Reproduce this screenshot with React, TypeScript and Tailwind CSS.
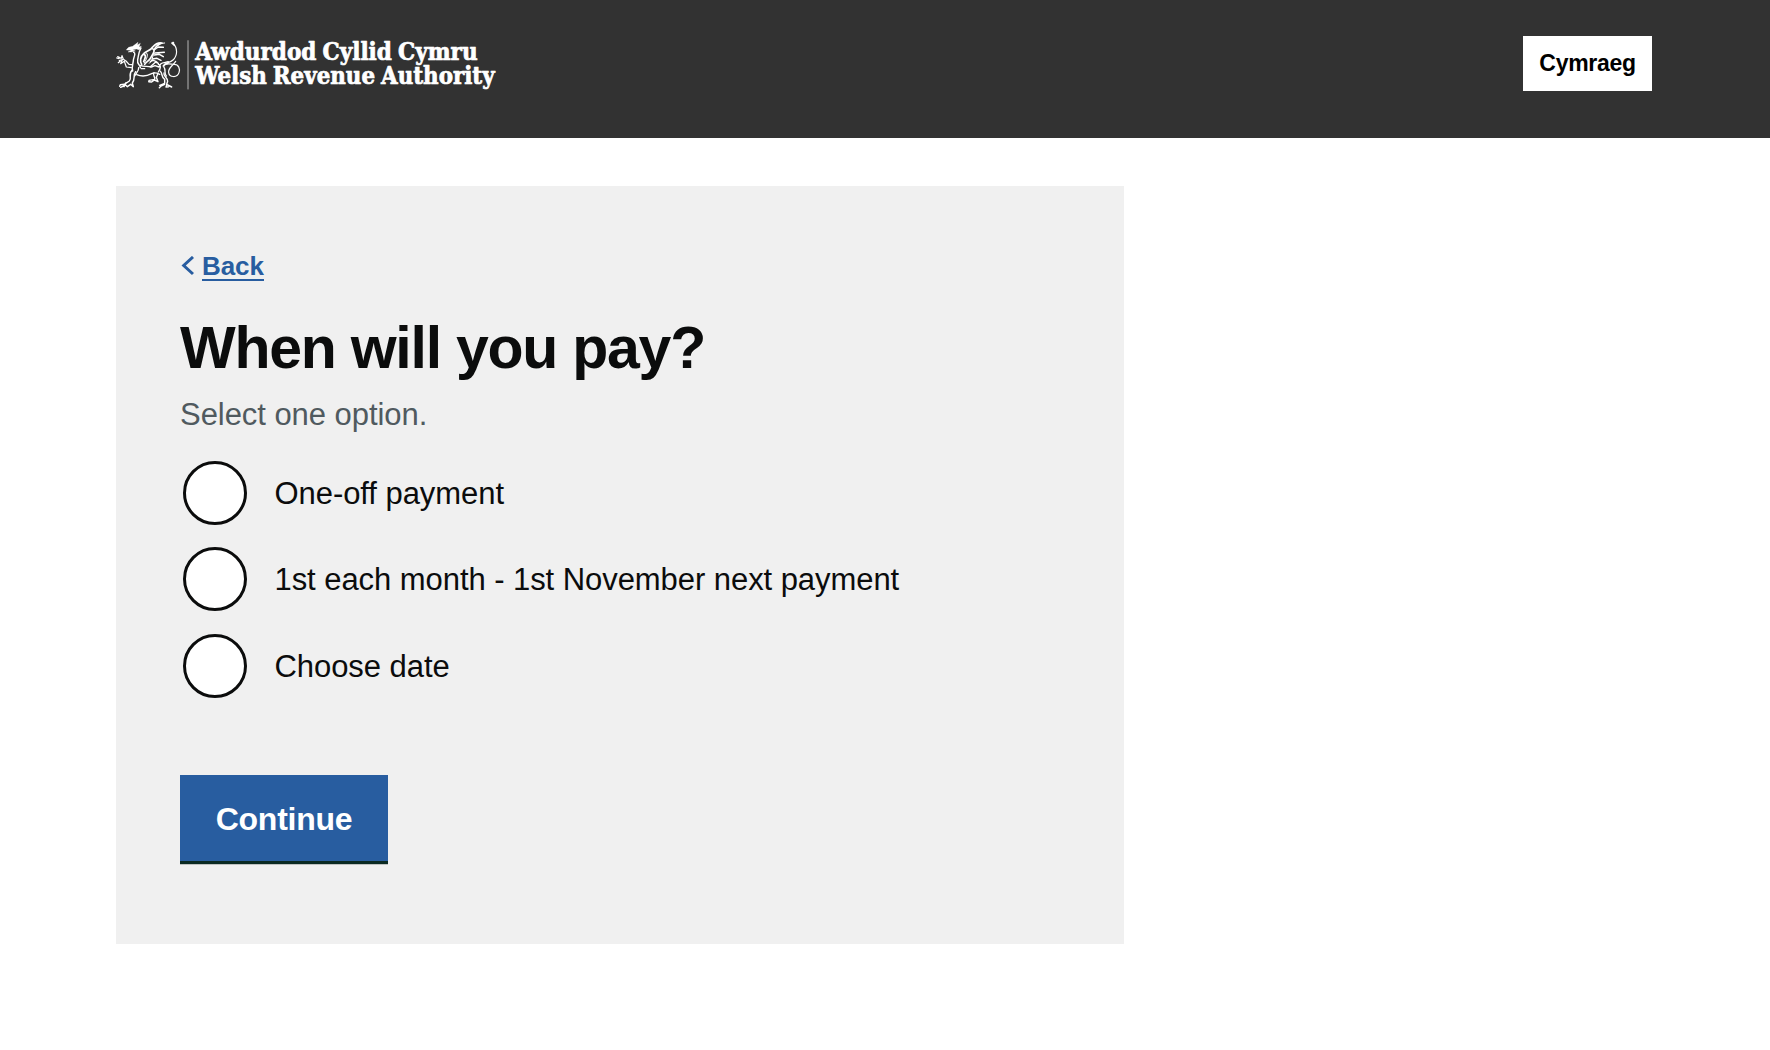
import React from "react";

function Logo() {
  return (
    <svg
      className="block h-[60px] w-[384px]"
      viewBox="18 0 1152 180"
      role="img"
      aria-label="Awdurdod Cyllid Cymru / Welsh Revenue Authority"
      fill="none"
      stroke="white"
      strokeLinecap="round"
      strokeLinejoin="round"
    >
      {/* Head and neck */}
      <path d="M50 46L56 40L68 37L84 25L82 33L91 28L87 39L94 37L88 48L80 45L68 47L76 51L64 54L54 54L64 49L50 48Z" fill="white" strokeWidth="1" />
      <path d="M71 55C79 57 70 72 70 79C70 88 64 98 68 111M93 42C84 58 86 66 83 77C80 92 91 91 91 101" strokeWidth="4.3" />
      {/* Raised foreleg */}
      <path d="M23 68L34 73L36 65L40 76L48 81L57 91L65 92M28 80L37 77L32 89L43 82L49 99L64 101M20 72L27 74M25 86L31 81" strokeWidth="3.7" />
      {/* Wings */}
      <path d="M95 91C89 82 91 68 101 59C111 49 122 50 128 39C137 29 145 25 156 27C145 31 137 37 132 48M101 61C111 63 104 75 101 83M129 45C138 49 126 64 121 73C117 81 109 83 104 91" strokeWidth="5" />
      <path d="M132 48L145 39L160 40M135 57L163 55M133 63L148 61L160 68M127 75L141 73L153 79M121 83C126 78 137 78 145 88L137 84L121 98" strokeWidth="4.3" />
      <path d="M107 56C118 58 110 75 103 87M133 58C125 69 130 76 118 88M149 29L164 27" strokeWidth="3" />
      {/* Body */}
      <path d="M91 94C103 100 111 95 124 99L135 95L147 99L152 90C158 84 168 86 175 83M94 104L104 104M80 122C97 129 110 127 125 119C134 114 141 117 149 121M145 91C155 94 151 105 145 114" strokeWidth="4" />
      {/* Front legs */}
      <path d="M66 109C53 124 67 132 58 141L43 151L31 152M77 113C68 124 77 134 67 147L70 158L62 151L52 158L47 153L32 160M31 152L29 157M48 146L42 158" strokeWidth="4.3" />
      <path d="M86 101C87 111 80 115 74 126" strokeWidth="4" />
      {/* Hind legs */}
      <path d="M132 116C126 125 137 128 134 136L117 139M143 121L139 130L144 143L133 138L125 144L116 143M151 112C159 119 153 130 164 136L164 148L149 154M162 117C159 127 174 132 173 142L170 151L185 159M164 151L153 156L148 161M171 151L168 159L176 158" strokeWidth="4.3" />
      {/* Tail */}
      <path d="M159 96C165 84 179 88 189 78C203 64 204 43 188 25M193 35L185 27L191 25M162 96C166 85 184 91 193 91C206 91 211 105 207 116C202 132 178 131 176 116C173 102 188 96 197 82" strokeWidth="3.5" />
      <path d="M161 98C169 108 161 118 169 126" strokeWidth="4" />
      <path d="M234 20V165" stroke="#b5b5b5" strokeWidth="3" />
      <g
        fill="white"
        strokeWidth="2"
        fontFamily="'DejaVu Serif Condensed', 'DejaVu Serif', serif"
        fontWeight="700"
        fontSize="70"
        wordSpacing="-4"
      >
        <text x="256" y="77" textLength="847" lengthAdjust="spacingAndGlyphs">Awdurdod Cyllid Cymru</text>
        <text x="256" y="149" textLength="898" lengthAdjust="spacingAndGlyphs">Welsh Revenue Authority</text>
      </g>
    </svg>
  );
}

const options = [
  "One-off payment",
  "1st each month - 1st November next payment",
  "Choose date",
];

export default function App() {
  return (
    <div className="min-h-screen bg-white font-['Liberation_Sans',Arial,sans-serif] text-[#0b0c0c]">
      <header className="flex h-[138px] items-start justify-between bg-[#323232] pr-[118px] pl-[116px]">
        <div className="pt-[34px]">
          <Logo />
        </div>
        <button className="mt-9 h-[55px] w-[129px] bg-white text-[23px] font-bold tracking-[-0.3px] text-black">
          Cymraeg
        </button>
      </header>

      <main className="mt-12 ml-[116px] flex h-[758px] w-[1008px] flex-col items-start bg-[#f0f0f0] px-16 pt-[64px]">
        <a href="#" className="flex h-8 items-center text-[#285da0]">
          <svg className="mr-2 ml-px h-5 w-[13px]" viewBox="0 0 13 20" fill="none" stroke="currentColor" strokeWidth="3">
            <path d="M12 1L2.7 9.5L12 18" />
          </svg>
          <span className="border-b-2 border-current pt-[3px] text-[26px] leading-[25px] font-bold tracking-[-0.1px]">Back</span>
        </a>
        <h1 className="mt-[34px] text-[59px] leading-[64px] font-bold tracking-[-1.25px] whitespace-nowrap">When will you pay?</h1>
        <p className="mt-[15px] text-[31px] leading-10 tracking-[-0.05px] text-[#505a5f]">Select one option.</p>
        <div className="mt-[26px] ml-[3px] flex flex-col gap-[22.4px]">
          {options.map((label) => (
            <label key={label} className="flex items-center">
              <input type="radio" name="when" className="size-16 appearance-none rounded-full border-3 border-[#0b0c0c] bg-white" />
              <span className="ml-[27.5px] pt-0.5 text-[31px] leading-10 tracking-[-0.06px] whitespace-nowrap">{label}</span>
            </label>
          ))}
        </div>
        <button className="mt-[77px] h-[86px] w-[208px] bg-[#285da0] pt-0.5 text-[32px] font-bold tracking-[-0.25px] text-white shadow-[0_3px_0_#0b2a22,0_4px_0_#bfc2c1]">
          Continue
        </button>
      </main>
    </div>
  );
}
